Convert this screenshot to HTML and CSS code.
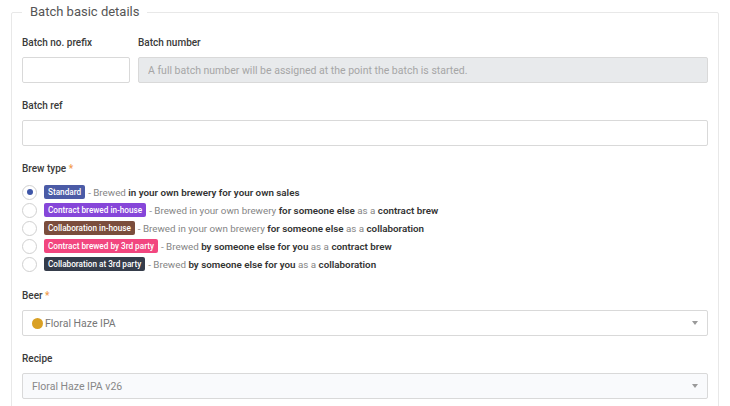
FILE: index.html
```html
<!DOCTYPE html>
<html lang="en">
<head>
  <meta charset="UTF-8">
  <meta name="viewport" content="width=device-width, initial-scale=1.0">
  <title>New batch</title>
  <link rel="stylesheet" href="styles.css">
</head>
<body>
  <fieldset class="panel">
    <legend>Batch basic details</legend>

    <div class="row">
      <div class="field prefix">
        <label>Batch no. prefix</label>
        <input class="input" type="text">
      </div>
      <div class="field">
        <label>Batch number</label>
        <input class="input" type="text" disabled placeholder="A full batch number will be assigned at the point the batch is started.">
      </div>
    </div>

    <div class="field">
      <label>Batch ref</label>
      <input class="input" type="text">
    </div>

    <div class="field radios">
      <label>Brew type <span class="req">*</span></label>
      <div class="radio checked">
        <span class="dot"></span>
        <span class="badge standard">Standard</span>
        <span class="desc">- Brewed <b>in your own brewery for your own sales</b></span>
      </div>
      <div class="radio">
        <span class="dot"></span>
        <span class="badge contract-in">Contract brewed in-house</span>
        <span class="desc">- Brewed in your own brewery <b>for someone else</b> as a <b>contract brew</b></span>
      </div>
      <div class="radio">
        <span class="dot"></span>
        <span class="badge collab-in">Collaboration in-house</span>
        <span class="desc">- Brewed in your own brewery <b>for someone else</b> as a <b>collaboration</b></span>
      </div>
      <div class="radio">
        <span class="dot"></span>
        <span class="badge contract-out">Contract brewed by 3rd party</span>
        <span class="desc">- Brewed <b>by someone else for you</b> as a <b>contract brew</b></span>
      </div>
      <div class="radio">
        <span class="dot"></span>
        <span class="badge collab-out">Collaboration at 3rd party</span>
        <span class="desc">- Brewed <b>by someone else for you</b> as a <b>collaboration</b></span>
      </div>
    </div>

    <div class="field">
      <label>Beer <span class="req">*</span></label>
      <div class="select">
        <span class="swatch"></span>
        <span class="value">Floral Haze IPA</span>
        <span class="caret"></span>
      </div>
    </div>

    <div class="field">
      <label>Recipe</label>
      <div class="select muted">
        <span class="value">Floral Haze IPA v26</span>
        <span class="caret"></span>
      </div>
    </div>
  </fieldset>
</body>
</html>
```

FILE: styles.css
```css
body {
  margin: 0;
  padding: 3px 11px 0;
  background: #fff;
  font-family: Roboto, "Liberation Sans", sans-serif;
  color: #333;
}
.panel {
  margin: 0;
  padding: 13px 10px 40px;
  border: 1px solid #e8e8e8;
  border-radius: 2px;
  min-width: 0;
}
.panel legend {
  padding: 0 8px;
  font-size: 13px;
  line-height: 18px;
  color: #555;
}
.row {
  display: grid;
  grid-template-columns: 108px 1fr;
  gap: 8px;
}
.field {
  margin-bottom: 14px;
}
.field label {
  display: block;
  font-size: 10px;
  font-weight: 500;
  line-height: 17px;
  margin-bottom: 6px;
  color: #3a3a3a;
}
.req {
  color: #f29a4a;
}
.input {
  display: block;
  box-sizing: border-box;
  width: 100%;
  height: 26px;
  margin: 0;
  padding: 0 9px;
  border: 1px solid #d9d9d9;
  border-radius: 2px;
  background: #fff;
  font-family: inherit;
  font-size: 10.5px;
}
.input:disabled {
  background: #e8eaec;
}
.input::placeholder {
  color: #a6a6a6;
}
.radio {
  display: flex;
  align-items: center;
  height: 18px;
  font-size: 9.8px;
}
.radio .dot {
  box-sizing: border-box;
  width: 15px;
  height: 15px;
  border: 1px solid #d0d0d0;
  border-radius: 50%;
  margin-right: 7px;
  flex: none;
  display: flex;
  align-items: center;
  justify-content: center;
}
.radio.checked .dot::after {
  content: "";
  width: 6px;
  height: 6px;
  border-radius: 50%;
  background: #3e56a8;
}
.badge {
  display: inline-block;
  padding: 1px 4px;
  border-radius: 2px;
  color: #fff;
  font-size: 8.2px;
  font-weight: 500;
  line-height: 12px;
  margin-right: 3px;
}
.badge.standard { background: #4b5ba6; }
.badge.contract-in { background: #8646d9; }
.badge.collab-in { background: #7b4d3c; }
.badge.contract-out { background: #f2467f; }
.badge.collab-out { background: #353c4a; }
.desc {
  color: #858585;
}
.desc b {
  color: #333;
  font-weight: 600;
}
.select {
  box-sizing: border-box;
  height: 26px;
  display: flex;
  align-items: center;
  padding: 0 9px;
  border: 1px solid #d9d9d9;
  border-radius: 2px;
  background: #fff;
  font-size: 10.5px;
  color: #777;
}
.select.muted {
  background: #f9fafc;
  color: #888;
}
.swatch {
  width: 11px;
  height: 11px;
  border-radius: 50%;
  background: #d9a024;
  margin-right: 2px;
}
.value {
  flex: 1;
}
.caret {
  width: 0;
  height: 0;
  border-left: 3.5px solid transparent;
  border-right: 3.5px solid transparent;
  border-top: 4px solid #9a9a9a;
}
```
